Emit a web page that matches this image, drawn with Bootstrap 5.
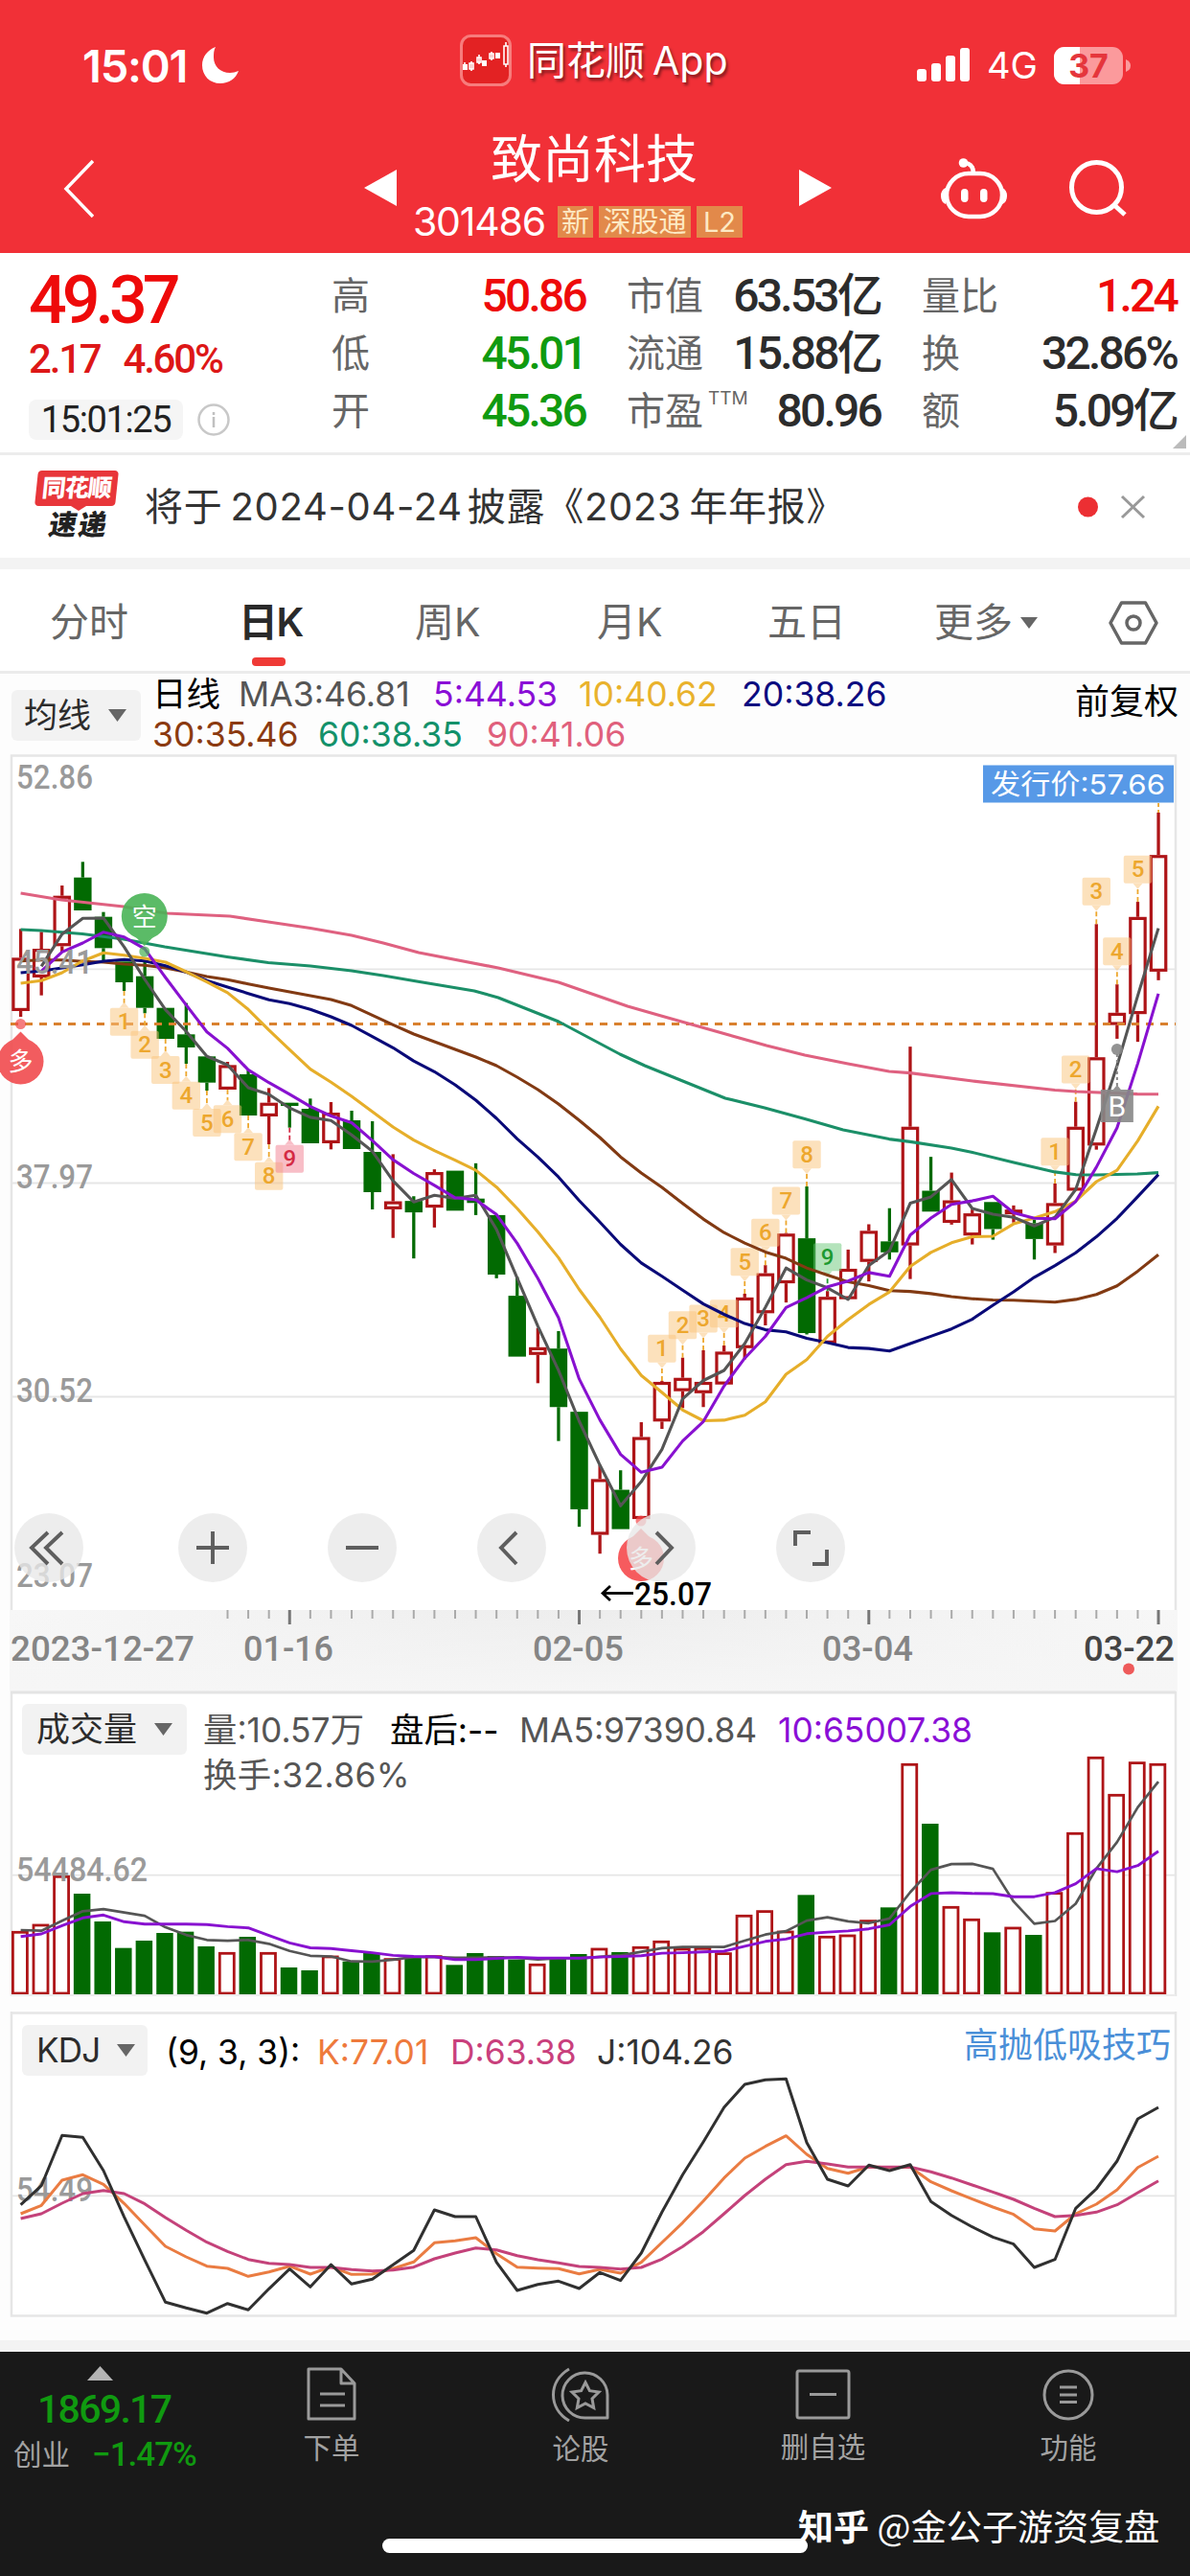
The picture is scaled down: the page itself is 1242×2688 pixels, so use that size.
<!DOCTYPE html>
<html lang="zh-CN">
<head>
<meta charset="utf-8">
<meta name="viewport" content="width=device-width, initial-scale=1">
<title>致尚科技 301486</title>
<link href="https://cdn.jsdelivr.net/npm/bootstrap@5.3.0/dist/css/bootstrap.min.css" rel="stylesheet">
<style>
body{width:1242px;height:2688px;overflow:hidden;background:#fdfdfd;color:#333;font-family:Inter,"Noto Sans CJK SC",sans-serif;line-height:1;white-space:nowrap}
svg{display:block;flex:none}
.num{font-family:Roboto,"Noto Sans CJK SC",sans-serif;font-weight:500}
.up{color:#ee0a0a}.down{color:#109a10}
.topbar{background:#f13037;height:264px;color:#fff}
.status-row{height:136px}
.status-row .clock{width:480px;padding-left:86px;font-size:47px;font-weight:600;letter-spacing:-1.2px}
.status-row .source{width:477px;font-size:41px;margin-top:-10px;text-shadow:2px 3px 3px rgba(0,0,0,.45)}
.status-row .net{font-size:38px}
.net span{margin:0 17px 0 17px}
.nav-row{height:128px}
.ico-back{margin:30px 282px 0 66px}
.ico-step{margin-top:41px}
.ico-robot{margin:29px 65px 0 114px}
.ico-search{margin-top:31px}
.stock{width:420px;height:128px}
.stock-name{font-size:54px;padding-top:4px;padding-right:8px}
.stock-code{font-size:41px;margin-top:20px;padding-left:17px;height:34px}
.stock-code .digits{width:151px;letter-spacing:-1.2px}
.flag{background:#e2894a;color:#fde9c4;font-size:29px;height:33px}
.flag-1{width:37px}.flag-3{width:96px;margin:0 6px}.flag-2{width:48px}
.quote{height:211px;border-bottom:3px solid #ececec;background:#fff}
.quote-main{width:316px;margin-left:30px}
.quote .last{font-size:70px;letter-spacing:-5px;height:60px;line-height:60px;margin-top:19px}
.quote .chg{font-size:42px;letter-spacing:-2.2px;margin-top:14px;height:36px;line-height:36px;color:#dd1717}
.chg span{margin-left:24px}
.quote .stamp-row{margin-top:24px}
.quote .stamp{background:#f5f5f5;border-radius:8px;width:161px;height:42px;font-size:38px;font-weight:400;letter-spacing:-1.4px;color:#222;margin-right:14px}
.qgrid{display:grid;grid-template-columns:265px 43px 265px 43px 266px;grid-auto-rows:60px;padding-top:15px}
.qgrid>div{display:flex;justify-content:space-between;align-items:center;font-size:40px;color:#666}
.qgrid .num{font-size:48px;letter-spacing:-2.8px;color:#2c2c2c;line-height:60px}
.qgrid .num.up{color:#ee0a0a}.qgrid .num.down{color:#109a10}
.ttm{font-size:19px;letter-spacing:0;position:relative;top:-21px;margin-left:5px}
.corner{margin:190px 0 0 -4px}
.notice{height:107px;background:#fff;font-size:40px}
.notice-text{width:973px;letter-spacing:.7px}
.notice-text span{margin:0 5px 0 8px}
.express{width:88px;margin:0 25px 0 38px}
.express .top{background:#e8363a;color:#fff;font-size:25px;font-weight:900;height:37px;width:84px;border-radius:4px;transform:skewX(-6deg);letter-spacing:-1px}
.express svg{margin-left:36px}
.express .bot{font-size:29px;font-weight:900;transform:skewX(-10deg);color:#222;height:33px;letter-spacing:2px}
.gap-band{height:12px;background:#f3f3f3}
.tabs-row{display:grid;grid-template-columns:52px 197px 184px 190px 178px 174px 182px 85px;height:109px;align-items:center;font-size:41px;color:#666;border-bottom:3px solid #ebebeb;background:#fff;padding-top:5px}
.tabs-row .on{color:#2a2a2a;font-weight:600;letter-spacing:-1.6px;position:relative}
.tabs-row .on::after{content:"";position:absolute;left:14px;top:57px;width:35px;height:9px;border-radius:4px;background:#ef3a36}
.tabs-row span svg{margin-left:8px}
.ma-info{height:84px;font-size:35.6px}
.pill{background:#f2f2f2;border-radius:6px;height:53px;font-size:35px;color:#2c2c2c}
.pill svg{margin-left:18px}
.pill-ma{width:135px;margin:17px 12px 0 12px;padding-left:13px}
.ma-lines{width:963px}
.ma-grid{display:grid;grid-template-columns:90px 203px 152px 170px 200px;height:43px;align-items:center}
.ma-grid2{display:grid;grid-template-columns:173px 176px 200px;height:41px;align-items:center}
.c-ma3{color:#555}.c-ma5{color:#8a0fd6}.c-ma10{color:#e9b22c}.c-ma20{color:#0c0c80}.c-ma30{color:#8b3a10}.c-ma60{color:#13916a}.c-ma90{color:#e0607c}
.adjust{color:#000;font-size:36px;padding-top:11px}
.charts{height:1655px}
.overlay-row{position:absolute;left:11px;width:1216px}
.row-zoom{top:792px;padding-left:4px}
.row-vol{top:991px;padding-left:12px}
.row-kdj{top:1326px;padding-left:12px;font-size:35.4px}
.pill-vol{width:172px;padding-left:15px}
.pill-kdj{width:131px;padding-left:15px;letter-spacing:-.8px}
.vol-text{margin-left:17px;padding-top:10px;font-size:35.4px}
.vol-grid{display:grid;grid-template-columns:195px 135px 270px 230px}
.turnover{color:#555;margin-top:12px;letter-spacing:.4px}
.kdj-text{display:grid;grid-template-columns:158px 139px 153px 383px;margin-left:19px;padding-top:11px}
.c-k{color:#ee7a3c}.c-d{color:#c9407c}
.kdj-tip{color:#4a8fd8;font-size:36px;padding-top:3px}
.zbtn{width:72px;height:72px;border-radius:50%;background:rgba(232,232,232,.78);margin-right:84px}
.zbtn:first-child{margin-right:99px}
.zbtn svg{fill:none;stroke:#5e5e5e;stroke-width:3.9px}
.bottombar{height:234px;background:#191919;color:#a2a2a2;font-size:29.5px}
.bottombar .tabitem svg{fill:none;stroke:#9a9a9a;stroke-width:3px;margin:0 auto 14px}
.index-box{width:210px;padding:15px 0 0 14px}
.index-box svg{margin-left:77px}
.index-val{font-size:41px;letter-spacing:-1.7px;margin:10px 0 0 25px}
.index-chg{font-size:35px;letter-spacing:-1px;margin-left:23px}
.index-name{margin-top:9px}
.tabitem{height:130px;padding-top:16px;text-align:center}
.w-a{width:272px}.w-b{width:248px}.w-c{width:258px;padding-top:18px}.w-d{width:254px;padding-top:18px}
.home{position:absolute;left:399px;top:195px;width:444px;height:15px;border-radius:8px;background:#fff}
.mark-note{position:absolute;left:833px;top:163px;font-size:37px;letter-spacing:.1px;color:#fff;font-family:"Noto Sans CJK SC",sans-serif}
</style>
</head>
<body>
<header class="topbar">
  <div class="status-row d-flex align-items-center">
    <div class="clock d-flex align-items-center">15:01
      <svg class="ms-3" width="39" height="38" viewBox="0 0 39 38"><path fill="#fff" d="M14 0C6 3 0 10 0 19c0 11 8 19 19 19 9 0 16-5 19-13-3 1-6 2-9 2C19 27 12 20 12 11c0-4 0-8 2-11z"/></svg></div>
    <div class="source d-flex align-items-center">
      <svg class="me-3" width="54" height="54" viewBox="0 0 54 54"><rect x="1.5" y="1.5" width="51" height="51" rx="10" fill="#e32223" stroke="#f77c7c" stroke-width="3"/><g fill="#fff"><path d="M3 31h5v6H3zM23 27h5v6h-5zM37 19h5v6h-5z"/></g><g fill="none" stroke="#fff" stroke-width="1.6"><path d="M10 30h4v6h-4zM12 28v10M18 24h4v5h-4zM20 21v10M31 20h4v5h-4zM33 18v9M46 12h4v19h-4zM48 8v4M48 31v3M5 29v2"/></g></svg>
      <span>同花顺<span class="ms-2">App</span></span></div>
    <div class="net d-flex align-items-center">
      <svg width="56" height="36" viewBox="0 0 56 36" fill="#fff"><rect y="22" width="10" height="13" rx="3"/><rect x="15" y="16" width="10" height="19" rx="3"/><rect x="30" y="8" width="10" height="27" rx="3"/><rect x="45" width="10" height="35" rx="3"/></svg>
      <span>4G</span>
      <svg width="80" height="39" viewBox="0 0 80 39"><defs><clipPath id="bat"><rect width="72" height="39" rx="11"/></clipPath></defs><g clip-path="url(#bat)"><rect width="72" height="39" fill="#fb9a9c"/><rect width="27" height="39" fill="#fff"/></g><path d="M75 13q5 2 5 6.500t-5 6.500z" fill="#fb9a9c"/><text x="36" y="31.500" text-anchor="middle" font-size="34" font-weight="700" fill="#e5363c">37</text></svg>
    </div>
  </div>
  <div class="nav-row d-flex">
    <svg class="ico-back" width="32" height="62" viewBox="0 0 32 62"><path d="M31 2L3 31l28 29" fill="none" stroke="#fff" stroke-width="3.500"/></svg>
    <svg class="ico-step" width="34" height="38" viewBox="0 0 34 38"><path d="M34 0v38L0 19z" fill="#fff"/></svg>
    <div class="stock">
      <div class="stock-name text-center">致尚科技</div>
      <div class="stock-code d-flex align-items-center"><span class="digits">301486</span>
        <span class="flag flag-1 d-flex align-items-center justify-content-center">新</span>
        <span class="flag flag-3 d-flex align-items-center justify-content-center">深股通</span>
        <span class="flag flag-2 d-flex align-items-center justify-content-center">L2</span></div>
    </div>
    <svg class="ico-step" width="34" height="38" viewBox="0 0 34 38"><path d="M0 0v38l34-19z" fill="#fff"/></svg>
    <svg class="ico-robot" width="69" height="64" viewBox="0 0 69 64"><g fill="none" stroke="#fff" stroke-width="4.500"><rect x="6" y="16" width="58" height="45" rx="23"/><path d="M25 5q9 1 9 11"/></g><g fill="#fff"><circle cx="23.500" cy="5" r="4.800"/><rect x="21" y="32" width="7.500" height="14" rx="3.700"/><rect x="41" y="32" width="7.500" height="14" rx="3.700"/><path d="M5 31q-5 2-5 8.500T5 48zM64 31q5 2 5 8.500T64 48z"/></g></svg>
    <svg class="ico-search" width="60" height="60" viewBox="0 0 60 60"><circle cx="28.500" cy="28.500" r="26" fill="none" stroke="#fff" stroke-width="5"/><path d="M47 47l11 10" stroke="#fff" stroke-width="5"/></svg>
  </div>
</header>

<section class="quote d-flex">
  <div class="quote-main">
    <div class="num last up">49.37</div>
    <div class="num chg">2.17<span>4.60%</span></div>
    <div class="stamp-row d-flex align-items-center">
      <div class="num stamp d-flex align-items-center justify-content-center">15:01:25</div>
      <svg width="36" height="36" viewBox="0 0 36 36"><circle cx="18" cy="18" r="15.500" fill="none" stroke="#c8c8c8" stroke-width="2.500"/><path d="M18 15v11M18 10v3" stroke="#c0c0c0" stroke-width="2.500"/></svg>
    </div>
  </div>
  <div class="qgrid">
    <div><span>高</span><span class="num up">50.86</span></div><i></i>
    <div><span>市值</span><span class="num">63.53亿</span></div><i></i>
    <div><span>量比</span><span class="num up">1.24</span></div>
    <div><span>低</span><span class="num down">45.01</span></div><i></i>
    <div><span>流通</span><span class="num">15.88亿</span></div><i></i>
    <div><span>换</span><span class="num">32.86%</span></div>
    <div><span>开</span><span class="num down">45.36</span></div><i></i>
    <div><span>市盈<span class="ttm">TTM</span></span><span class="num">80.96</span></div><i></i>
    <div><span>额</span><span class="num">5.09亿</span></div>
  </div>
  <svg class="corner" width="14" height="14" viewBox="0 0 14 14"><path d="M14 0v14H0z" fill="#bbb"/></svg>
</section>

<section class="notice d-flex align-items-center">
  <div class="express">
    <div class="top d-flex align-items-center justify-content-center">同花顺</div>
    <svg width="16" height="5" viewBox="0 0 16 5"><path d="M0 0h16L8 5z" fill="#e8363a"/></svg>
    <div class="bot text-center">速递</div>
  </div>
  <div class="notice-text">将于<span>2024-04-24</span>披露《2023<span>年年报》</span></div>
  <svg width="72" height="26" viewBox="0 0 72 26"><circle cx="11.500" cy="13" r="10.500" fill="#ec2f33"/><path d="M47 2l23 22M70 2L47 24" stroke="#999" stroke-width="3"/></svg>
</section>
<div class="gap-band"></div>

<nav class="tabs-row">
  <i></i><span>分时</span><span class="on">日K</span><span>周K</span><span>月K</span><span>五日</span>
  <span class="d-flex align-items-center">更多<svg width="18" height="12" viewBox="0 0 18 12"><path d="M0 0h18L9 12z" fill="#666"/></svg></span>
  <svg width="52" height="46" viewBox="0 0 52 46"><path d="M13.500 2h25L50 23 38.500 44h-25L2 23z" fill="none" stroke="#666" stroke-width="3.500" stroke-linejoin="round"/><circle cx="26" cy="23" r="7" fill="none" stroke="#666" stroke-width="3.500"/></svg>
</nav>

<section class="ma-info d-flex">
  <div class="pill pill-ma d-flex align-items-center">均线<svg width="19" height="13" viewBox="0 0 19 13"><path d="M0 0h19L9.500 13z" fill="#666"/></svg></div>
  <div class="ma-lines">
    <div class="ma-grid"><span class="text-black">日线</span><span class="c-ma3">MA3:46.81</span><span class="c-ma5">5:44.53</span><span class="c-ma10">10:40.62</span><span class="c-ma20">20:38.26</span></div>
    <div class="ma-grid2"><span class="c-ma30">30:35.46</span><span class="c-ma60">60:38.35</span><span class="c-ma90">90:41.06</span></div>
  </div>
  <div class="adjust">前复权</div>
</section>

<main class="charts position-relative">
  <svg id="plot" width="1242" height="1655" viewBox="0 787 1242 1655" font-family="Roboto, 'Noto Sans CJK SC', sans-serif"></svg>
  <div class="overlay-row row-zoom d-flex">
    <div class="zbtn"><svg width="72" height="72" viewBox="0 0 72 72"><path d="M35 20L18 36l17 17M50 20L33 36l17 17"/></svg></div>
    <div class="zbtn"><svg width="72" height="72" viewBox="0 0 72 72"><path d="M19 36h34M36 19v34"/></svg></div>
    <div class="zbtn"><svg width="72" height="72" viewBox="0 0 72 72"><path d="M19 36h34"/></svg></div>
    <div class="zbtn"><svg width="72" height="72" viewBox="0 0 72 72"><path d="M41 20L25 36l16 17"/></svg></div>
    <div class="zbtn"><svg width="72" height="72" viewBox="0 0 72 72"><path d="M31 20l16 16-16 17"/></svg></div>
    <div class="zbtn"><svg width="72" height="72" viewBox="0 0 72 72"><path d="M20 34V20h16M38 53h15V38"/></svg></div>
  </div>
  <div class="overlay-row row-vol d-flex">
    <div class="pill pill-vol d-flex align-items-center">成交量<svg width="19" height="13" viewBox="0 0 19 13"><path d="M0 0h19L9.500 13z" fill="#666"/></svg></div>
    <div class="vol-text">
      <div class="vol-grid"><span class="c-ma3">量:10.57万</span><span class="text-black">盘后:--</span><span class="c-ma3">MA5:97390.84</span><span class="c-ma5">10:65007.38</span></div>
      <div class="turnover">换手:32.86%</div>
    </div>
  </div>
  <div class="overlay-row row-kdj d-flex">
    <div class="pill pill-kdj d-flex align-items-center">KDJ<svg width="19" height="13" viewBox="0 0 19 13"><path d="M0 0h19L9.500 13z" fill="#666"/></svg></div>
    <div class="kdj-text"><span class="text-black">(9, 3, 3):</span><span class="c-k">K:77.01</span><span class="c-d">D:63.38</span><span>J:104.26</span></div>
    <div class="kdj-tip">高抛低吸技巧</div>
  </div>
</main>
<div class="gap-band"></div>

<footer class="bottombar position-relative d-flex">
  <div class="index-box">
    <svg width="27" height="15" viewBox="0 0 27 15"><path d="M0 15h27L13.500 0z" fill="#b4b4b4"/></svg>
    <div class="num down index-val">1869.17</div>
    <div class="index-name d-flex align-items-center"><span>创业</span><span class="num down index-chg">−1.47%</span></div>
  </div>
  <div class="tabitem w-a">
    <svg width="52" height="56" viewBox="0 0 52 56"><path d="M2 2h34l14 15v37H2zM36 2v15h14M14 28h26M14 40h26" stroke-linejoin="round"/></svg>
    <div>下单</div></div>
  <div class="tabitem w-b">
    <svg width="60" height="57" viewBox="0 0 60 57"><path d="M18 2C-4 15-4 43 18 56"/><path d="M58 53H35A23.500 23.500 0 1 1 58 29z" stroke-linejoin="round"/><path d="M35 16l4.400 8.700 9.600 1.400-7 6.800 1.700 9.600L35 38l-8.700 4.500 1.700-9.600-7-6.800 9.600-1.400z"/></svg>
    <div>论股</div></div>
  <div class="tabitem w-c">
    <svg width="58" height="53" viewBox="0 0 58 53"><rect x="2" y="2" width="54" height="49" rx="2"/><path d="M15 26.500h28"/></svg>
    <div>删自选</div></div>
  <div class="tabitem w-d">
    <svg width="54" height="54" viewBox="0 0 54 54"><circle cx="27" cy="27" r="25"/><path d="M18 19h18M18 27h18M18 34.500h18"/></svg>
    <div>功能</div></div>
  <div class="home"></div>
  <div class="mark-note"><b class="fw-bold">知乎</b> @金公子游资复盘</div>
</footer>

<script src="https://cdn.jsdelivr.net/npm/bootstrap@5.3.0/dist/js/bootstrap.bundle.min.js"></script>
<script>
const X=i=>21.6+21.59*i, out=[];
const add=s=>out.push(s);
const RED='#ae1417',GREEN='#026a02';
const line=(x1,y1,x2,y2,c,w,extra='')=>add(`<path d="M${x1} ${y1}L${x2} ${y2}" stroke="${c}" stroke-width="${w}" ${extra}/>`);
const text=(x,y,s,w,size,fill,extra='')=>add(`<text x="${x}" y="${y}" font-size="${size}" fill="${fill}" ${w?`textLength="${w}" lengthAdjust="spacingAndGlyphs"`:''} ${extra}>${s}</text>`);
const poly=(pts,c,w=3.1)=>add(`<polyline points="${pts.map(p=>p[0].toFixed(1)+','+p[1].toFixed(1)).join(' ')}" fill="none" stroke="${c}" stroke-width="${w}" stroke-linejoin="round"/>`);
// moving average of a series; the first values come from earlier sessions
function avg(vals,n,head){return vals.map((_,i)=>i<head.length?head[i]:vals.slice(i-n+1,i+1).reduce((a,b)=>a+b,0)/n);}

// panel frames
add('<rect x="12" y="788.5" width="1215" height="1628" fill="#fff" stroke="#e6e6e6" stroke-width="2.5"/>');
[1011.3,1234.5,1457.5].forEach(y=>line(12,y,1226,y,'#e6e6e6',1.8));
add('<defs><linearGradient id="ax" x1="0" x2="1"><stop offset="0" stop-color="#f7f7f7"/><stop offset=".5" stop-color="#ededed"/><stop offset="1" stop-color="#f7f7f7"/></linearGradient><linearGradient id="ay" x1="0" x2="0" y1="0" y2="1"><stop offset="0" stop-color="#f5f5f5" stop-opacity="0"/><stop offset="1" stop-color="#f6f6f6"/></linearGradient></defs>');
add('<rect x="10" y="1680" width="1218" height="85" fill="url(#ax)"/><rect x="10" y="1680" width="1218" height="85" fill="url(#ay)"/>');
line(11,1766,1227,1766,'#e4e4e4',3);
for(let i=10;i<56;i++){const m=[13,27,41,55].includes(i);line(X(i),1680,X(i),m?1695:1689,m?'#777':'#aaa',m?3:2);}

// candles: direction, high, body top, body bottom, low
const sets=[
 [780,3,`R568,658,825,843 R577,630,720,776 R432,464,622,640 G358,407,510,510 G515,530,628,667 G670,670,735,762 G670,716,815,832 G815,815,912,912 G800,898,939,990 G967,967,1049,1074 R984,994,1071,1071 G1010,1023,1152,1152 R1066,1112,1155,1242 G1112,1112,1122,1190 G1099,1131,1239,1239 R1110,1143,1239,1258 G1137,1167,1257,1257 G1170,1266,1392,1446`],
 [1150,2.85,`R155,295,319,404 G280,294,328,465 R200,208,314,373 G204,204,323,323 G182,287,300,336 G336,336,513,524 G520,576,757,757 R672,729,752,836 G681,733,907,1008 G921,921,1211,1263 R1080,1121,1287,1343 G1095,1153,1270,1270 R952,996,1240,1240 R829,832,950,972 R760,820,860,910 R738,832,866,907 R724,742,840,840 R570,581,732,765 R485,509,628,664 R389,391,539,596 G251,405,687,691 R562,579,718,718`],
 [780,2.8,`R1467,1523,1612,1612 R1393,1412,1503,1560 G1346,1443,1475,1496 R874,1108,1455,1553 G1196,1295,1356,1356 R1242,1323,1389,1394 R1350,1361,1426,1452 G1328,1328,1407,1438 R1338,1350,1364,1388 G1380,1390,1436,1496 R1274,1331,1455,1477 R1035,1108,1295,1295 R516,905,1163,1175 R692,775,811,851 R451,495,779,860 R190,314,655,680`]];
const candles=[];
sets.forEach(([y0,k,s])=>s.split(/\s+/).forEach(c=>candles.push([c[0],...c.slice(1).split(',').map(v=>y0+v/k)])));
candles.forEach(([d,h,t,b,l],i)=>{const x=X(i),c=d=='R'?RED:GREEN;
 line(x,h,x,t,c,3.3);line(x,b,x,l,c,3.3);
 if(d=='R'&&b-t>6)add(`<rect x="${x-7.7}" y="${t+1.6}" width="15.4" height="${b-t-3.2}" fill="#fff" stroke="${c}" stroke-width="3.2"/>`);
 else add(`<rect x="${x-9.2}" y="${t}" width="18.4" height="${b-t}" fill="${c}"/>`);});
line(11,1068.5,1227,1068.5,'#d9812f',2.8,'stroke-dasharray="8 7"');

// sequence tags
function tag(i,y,n,down,kind){const x=X(i),p={o:['#fbc47b','#eda72e'],p:['#f27f90','#d42a44'],g:['#6cc97a','#1d9a30']}[kind||'o'],h=29;
 const w=candles[i];
 if(down){line(x,w[4],x,y-5,p[1],1.8,'stroke-dasharray="5 3"');}else line(x,w[1],x,y+h+5,p[1],1.8,'stroke-dasharray="5 3"');
 add(`<g opacity=".5"><rect x="${x-14.7}" y="${y}" width="29.4" height="${h}" rx="2" fill="${p[0]}"/><path d="${down?`M${x-5} ${y}L${x} ${y-6}L${x+5} ${y}z`:`M${x-5} ${y+h}L${x} ${y+h+6}L${x+5} ${y+h}z`}" fill="${p[0]}"/></g>`);
 text(x,y+22.5,n,0,24,p[1],'text-anchor="middle" font-weight="500"');}
[[5,1051.7],[6,1075.7],[7,1102],[8,1128.7],[9,1157],[10,1153.3],[11,1182.3],[12,1212.7]].forEach(([i,y],k)=>tag(i,y,k+1,true));
tag(13,1194.7,9,true,'p');
[[31,692],[32,622],[33,603],[34,588],[35,434],[36,347],[37,252],[38,115]].forEach(([i,v],k)=>tag(i,1150+v/2.85,k+1,false));
tag(39,1150+420/2.85,9,false,'g');
[[50,1140],[51,900],[52,380],[53,555],[54,316]].forEach(([i,v],k)=>tag(i,780+v/2.8,k+1,false));

// averages
const close=candles.map(c=>c[0]=='R'?c[2]:c[3]);
const a=(...v)=>v.map(n=>780+n/3);
const pts=v=>v.map((y,i)=>[X(i),y]);
poly([[21.6,932],[64,939],[129,946],[174,953],[240,956],[280,962],[324,968.5],[367,976],[400,984],[437,994],[520,1010],[583,1025],[655,1050],[690,1060],[800,1091],[840,1101],[885,1110],[928,1118],[950,1119.6],[1015,1128],[1101,1137.5],[1123,1139],[1187,1141.6],[1209,1141.8]],'#df6180');
poly([[21.6,970],[43,971],[86,974.5],[129,980],[172,988],[237,998.5],[280,1004.5],[324,1008],[367,1013],[400,1018],[435,1024],[495,1034],[520,1041],[583,1066],[647,1100],[673,1112],[757,1146],[798,1156],[840,1167.5],[880,1179],[928,1188.6],[950,1191.4],[993,1198],[1015,1202.5],[1058,1213],[1101,1222.9],[1123,1225.7],[1144,1226],[1187,1225],[1209,1223.6]],'#1b8f68');
poly(pts(avg(close,30,[...a(668,665,665,670,672,678,682,690,703,717,727,740,753,765,777,789,808,838,868),1079,1087,1095,1103,1112,1124,1137,1152,1169,1187])),'#823a13');
poly(pts(avg(close,20,a(705,700,690,680,669,664,668,683,703,730,750,770,790,802,820,843,870,905,940))),'#0a0a78');
poly(pts(avg(close,10,a(738,730,705,668,643,650,660,672,702))),'#e6ae2a');
poly(pts(avg(close,3,a(690,685))).slice(1),'#555');
poly(pts(avg(close,5,a(705,700,640,612))).slice(1),'#8811d0');

// long / short / B markers
function pin(x,y,c,s,up){add(`<g fill="${c}" opacity=".9"><circle cx="${x}" cy="${y}" r="24"/><path d="M${x-9} ${y+(up?-22:22)}L${x} ${y+(up?-31:31)}L${x+9} ${y+(up?-22:22)}z"/><circle cx="${x}" cy="${y+(up?-39:37)}" r="5.500" opacity=".8"/></g>`);text(x,y+9.5,s,0,26,'#fff','text-anchor="middle"');}
pin(21.5,1107.5,'#f14b4e','多',true);pin(150.8,956,'#4ab457','空',false);pin(669,1626,'#f64a4d','多',true);
line(X(53),1100,X(53),1134,'#888',2,'stroke-dasharray="3 3"');
add(`<g fill="#888" opacity=".9"><circle cx="${X(53)}" cy="1095" r="6"/><path d="M${X(53)-17} 1137h13l4-5 4 5h13v34h-34z"/></g>`);
text(X(53),1165,'B',0,30,'#fff','text-anchor="middle"');

// axis labels
const med='font-weight="500"';
[['52.86',823],['45.41',1015.5],['37.97',1239.5],['30.52',1463],['23.07',1656]].forEach(([s,y])=>text(17,y,s,80,35.5,'#9a9a9a',med));
text(11,1732.5,'2023-12-27',192,36,'#858585',med);text(254,1732.5,'01-16',94,36,'#858585',med);text(556,1732.5,'02-05',95,36,'#858585',med);text(858,1732.5,'03-04',95,36,'#858585',med);text(1131,1732.5,'03-22',95,36,'#444',med);
add('<circle cx="1178" cy="1741.500" r="6" fill="#ee5a5a"/>');
line(629,1662.500,661,1662.500,'#000',2.8);add('<path d="M637 1655l-8 7.500 8 7.500" fill="none" stroke="#000" stroke-width="2.800"/>');
text(662,1675,'25.07',81,33,'#000',med);
add('<rect x="1026" y="798.500" width="199" height="39" fill="#5799e7"/>');
text(1034,829,'发行价:57.66',182,29,'#fff','font-family="Inter, \'Noto Sans CJK SC\', sans-serif"');
line(X(55),838,X(55),848,'#eda72e',1.8,'stroke-dasharray="4 3"');

// volume
line(12,1956.700,1226,1956.700,'#e6e6e6',1.8);
const vol='1125 1103 951 1008 1095 1178 1155 1131 1127 1173 1191 1143 1191 1239 1248 1202 1220 1194 1210 1206 1201 1231 1194 1203 1214 1227 1212 1197 1178 1191 1173 1155 1178 1176 1192 1074 1060 1124 1012 1140 1136 1090 1051 600 789 1047 1086 1129 1112 1137 1003 816 579 696 595 600'.split(' ').map(v=>1640+v/3);
const vdir='RRRGGGGGGGRGRGGRGGRGRGGGGRGGRGRRRRRRRRGRRRGRGRRGRGRRRRRR';
vol.forEach((y,i)=>{const x=X(i);
 if(vdir[i]=='R')add(`<rect x="${x-8.2}" y="${y+1.3}" width="15" height="${2081-y-2.3}" fill="#fff" stroke="${RED}" stroke-width="2.8"/>`);
 else add(`<rect x="${x-9.500}" y="${y}" width="17.500" height="${2081-y}" fill="${GREEN}"/>`);});
const v=(...n)=>n.map(q=>1640+q/3);
poly(pts(avg(vol,5,v(1122,1124,1093,1063))),'#555',2.7);
poly(pts(avg(vol,10,v(1142,1134,1108,1084,1075,1096,1103,1103,1103))),'#8811d0',2.9);
text(17,1962.500,'54484.62',137,35,'#9a9a9a',med);
line(11,2082,1227,2082,'#ececec',2);
add('<rect x="9" y="2083" width="1222" height="16" fill="#fdfdfd"/>');
line(11,2100.500,1227,2100.500,'#e6e6e6',2.5);

// KDJ
line(12,2291.300,1226,2291.300,'#e6e6e6',1.8);
text(17,2297,'54.49',80,35.5,'#9a9a9a',med);
const kdj={
 '#ea7c42':'660 634 555 538 568 628 695 762 795 824 831 856 842 824 849 826 850 849 832 811 751 745 735 785 827 830 832 848 834 846 812 750 688 620 548 486 449 416 474 518 533 513 515 514 560 588 614 639 662 707 714 660 630 585 515 480',
 '#c4427a':'675 660 627 597 587 597 629 672 712 749 778 803 815 819 828 828 835 839 836 827 801 783 767 773 791 804 814 825 828 833 828 802 763 716 660 603 552 506 496 504 514 514 514 514 529 548 570 592 615 643 669 665 655 632 594 557',
 '#303030':'632 572 415 421 525 670 805 937 955 971 941 961 895 833 889 819 880 865 820 775 648 669 669 812 900 881 871 894 844 869 783 655 538 435 327 255 241 238 437 552 573 508 525 506 622 665 701 733 755 828 803 643 582 495 363 327'};
for(const c in kdj)poly(pts(kdj[c].split(' ').map(n=>2090+n/3)),c,3);
document.getElementById('plot').innerHTML=out.join('');
</script>
</body>
</html>
